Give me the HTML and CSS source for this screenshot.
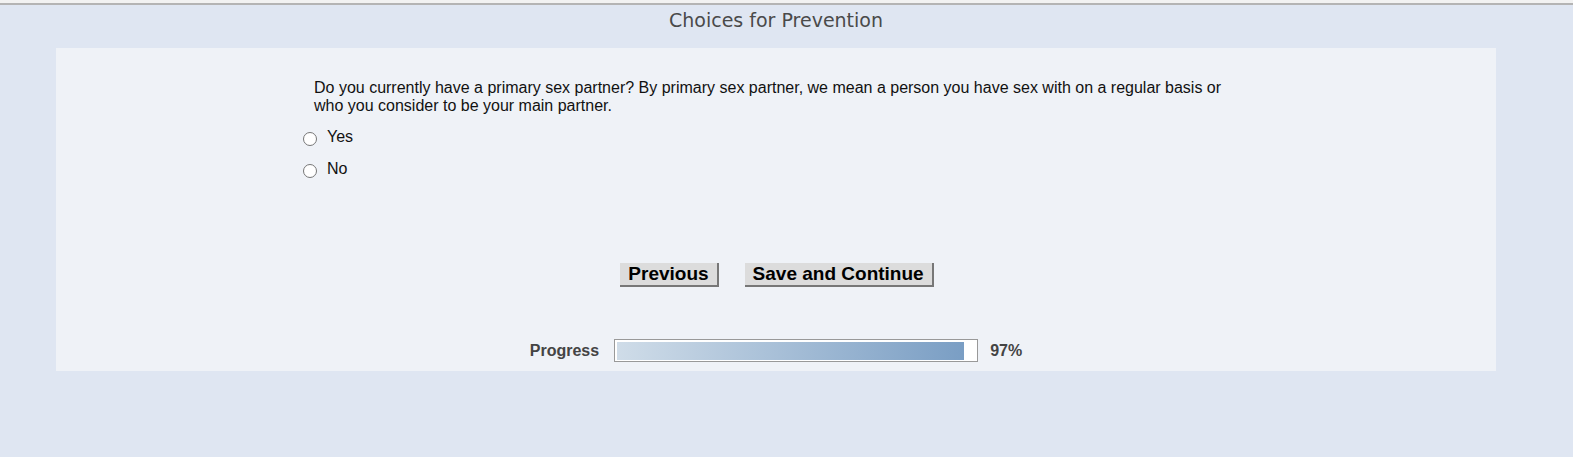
FILE: index.html
```html
<!DOCTYPE html>
<html lang="en">
<head>
    <meta charset="utf-8">
    <title>Choices for Prevention</title>
    <link rel="stylesheet" href="styles.css">
</head>
<body>
    <div class="topline"></div>
    <h1 class="title">Choices for Prevention</h1>

    <div class="panel">
        <div class="question">
            <p class="question-text">
                Do you currently have a primary sex partner? By primary sex partner, we mean a person you have sex with on a regular basis or
                who you consider to be your main partner.
            </p>
            <label class="choice"><input type="radio" name="partner" value="yes"> Yes</label>
            <label class="choice"><input type="radio" name="partner" value="no"> No</label>
        </div>

        <div class="buttons">
            <button class="btn">Previous</button>
            <button class="btn">Save and Continue</button>
        </div>

        <div class="progress">
            <span class="progress-label">Progress</span>
            <div class="progress-bar">
                <div class="progress-fill" style="width: 97%"></div>
            </div>
            <span class="progress-value">97%</span>
        </div>
    </div>
</body>
</html>
```

FILE: styles.css
```css
body {
    margin: 0;
    padding: 0;
    background-color: #dfe6f2;
    font-family: "Liberation Sans", Arial, sans-serif;
    color: #111;
    height: 457px;
}

.topline {
    height: 3px;
    background-color: #f2f2f2;
    border-bottom: 2px solid #b4b4b4;
}

.title {
    margin: 0;
    width: 1552px;
    height: 43px;
    text-align: center;
    font-family: "DejaVu Sans", Tahoma, sans-serif;
    font-weight: normal;
    font-size: 19px;
    line-height: 30px;
    color: #4a4a4a;
}

.panel {
    width: 1440px;
    height: 323px;
    margin-left: 56px;
    background-color: #eff2f7;
    box-sizing: border-box;
    padding-top: 31px;
}

.question {
    width: 930px;
    margin-left: 247px;
    height: 184px;
}

.question-text {
    width: 918px;
    margin: 0 0 6px 11px;
    font-size: 16px;
    line-height: 18px;
}

.choice {
    display: flex;
    align-items: center;
    font-size: 16px;
    height: 32px;
}

.choice input {
    appearance: none;
    box-sizing: border-box;
    width: 14px;
    height: 14px;
    margin: 3px 10px 0 0;
    border: 1px solid #767676;
    border-radius: 50%;
    background-color: #fff;
}

.buttons {
    display: flex;
    justify-content: center;
    gap: 26px;
    margin-left: 2px;
}

.btn {
    font-family: "Liberation Sans", Arial, sans-serif;
    font-weight: bold;
    font-size: 19px;
    height: 24px;
    line-height: 22px;
    padding: 0 8px;
    background-color: #dcdcdc;
    color: #000;
    border-style: solid;
    border-color: #eee #777 #777 #eee;
    border-width: 0 2px 2px 0;
}

.progress {
    display: flex;
    align-items: center;
    justify-content: center;
    margin-top: 52px;
}

.progress-label {
    font-size: 16px;
    font-weight: bold;
    color: #444;
    margin-right: 15px;
}

.progress-bar {
    width: 358px;
    height: 18px;
    padding: 2px 2px 1px;
    background-color: #fff;
    border: 1px solid #999;
}

.progress-fill {
    height: 100%;
    background: linear-gradient(to right, #cfdce8, #7a9ec4);
}

.progress-value {
    font-size: 16px;
    font-weight: bold;
    color: #444;
    margin-left: 12px;
}
```
